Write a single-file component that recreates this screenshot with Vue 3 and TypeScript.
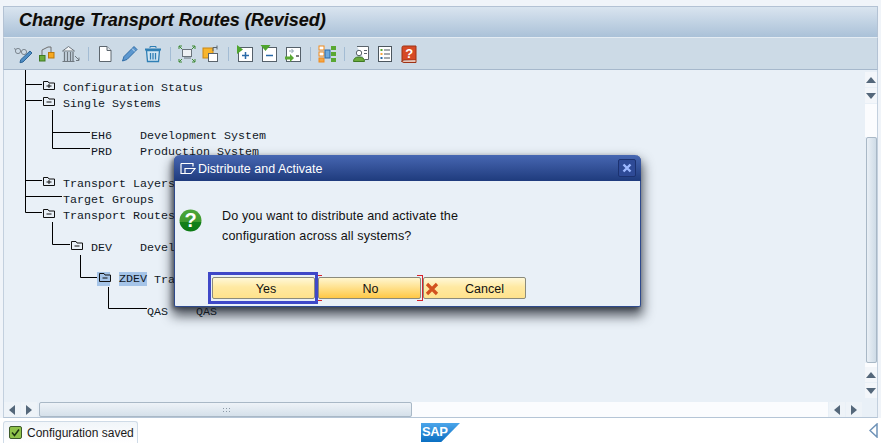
<script setup lang="ts">
interface Row { x: number; icon?: 'plus' | 'minus'; sel?: string; text: string }
const rows: Row[] = [
  { x: 43, icon: 'plus', text: 'Configuration Status' },
  { x: 43, icon: 'minus', text: 'Single Systems' },
  { x: 0, text: '' },
  { x: 91, text: 'EH6    Development System' },
  { x: 91, text: 'PRD    Production System' },
  { x: 0, text: '' },
  { x: 43, icon: 'plus', text: 'Transport Layers' },
  { x: 63, text: 'Target Groups' },
  { x: 43, icon: 'minus', text: 'Transport Routes' },
  { x: 0, text: '' },
  { x: 71, icon: 'minus', text: 'DEV    Development' },
  { x: 0, text: '' },
  { x: 99, icon: 'minus', sel: 'ZDEV', text: ' Tran' },
  { x: 0, text: '' },
  { x: 147, text: 'QAS    QAS' },
]
const connectors = [
  'M25.5 70V212.5H42', 'M25.5 84.5H42', 'M25.5 100.5H42', 'M25.5 180.5H42', 'M25.5 196.5H62',
  'M52.5 110V148.5H90', 'M52.5 132.5H90',
  'M52.5 222V244.5H70', 'M80.5 255V277.5H97', 'M108.5 287V308.5H147',
]
</script>

<template>
  <div class="page">
    <div class="frame">
      <div class="titlebar"><h1>Change Transport Routes (Revised)</h1></div>
      <div class="toolbar">
        <span class="slot"><svg viewBox="0 0 20 20"><circle cx="5" cy="7" r="2.6" fill="none" stroke="#7d8790"/><circle cx="11" cy="8" r="2.6" fill="none" stroke="#7d8790"/><path d="M7.6 7.5 8.6 7.8M2.5 6 1.5 4" stroke="#7d8790" fill="none"/><path d="M17 7l2 2-9 9-3 .7.7-3z" fill="#4f8dc4" stroke="#2c6496"/></svg></span>
        <span class="slot"><svg viewBox="0 0 20 20"><path d="M5 11V6l6-3h3v5" fill="none" stroke="#6f6f6f"/><rect x="2.5" y="11.5" width="5.5" height="5.5" fill="#6cab3c" stroke="#3f7a22"/><rect x="11.5" y="8.5" width="5.5" height="5.5" fill="#f7a81f" stroke="#b9770c"/></svg></span>
        <span class="slot"><svg viewBox="0 0 20 20"><path d="M1.5 7 7.5 2.5l6 4.5zM1.5 17.5h12" fill="#f3f5f7" stroke="#6f7880"/><path d="M3.5 8v9M6.5 8v9M9.5 8v9M12 8v9" stroke="#6f7880" stroke-width="1.3"/><path d="M14 12l4 4M18 13.5V16.5H15" fill="none" stroke="#6f7880"/></svg></span>
        <span class="sep"></span>
        <span class="slot"><svg viewBox="0 0 20 20"><path d="M4.5 2.500h7.500l4 4v11h-11.500z" fill="#fff" stroke="#5d666e"/><path d="M12 2.500v4h4" fill="#dfe5ea" stroke="#5d666e"/></svg></span>
        <span class="slot"><svg viewBox="0 0 20 20"><path d="M15 2.500l3 3-10 10-4.500 1.500 1.500-4.500z" fill="#5c97cf" stroke="#2f6ca6"/><path d="M13 4.500l3 3" stroke="#cfe2f3"/></svg></span>
        <span class="slot"><svg viewBox="0 0 20 20"><path d="M2 5.500h16" stroke="#2f7fb5" stroke-width="2"/><path d="M7 4V2.500h6V4" fill="none" stroke="#2f7fb5"/><path d="M3.500 6.500h13l-1 11h-11z" fill="#d2e6f3" stroke="#2f7fb5" stroke-width="1.300"/><path d="M7.500 9v6.500M10 9v6.500M12.500 9v6.500" stroke="#2f7fb5" stroke-width="1.300"/></svg></span>
        <span class="sep"></span>
        <span class="slot"><svg viewBox="0 0 20 20"><rect x="5.500" y="5.500" width="9" height="7" fill="#eef1f4" stroke="#6b747c"/><path d="M7 14h7" stroke="#6b747c"/><path d="M2 2l3 3M2 5V2h3M18 2l-3 3M18 5V2h-3M2 18l3-3M2 15v3h3M18 18l-3-3M18 15v3h-3" fill="none" stroke="#3f8a35"/></svg></span>
        <span class="slot"><svg viewBox="0 0 20 20"><rect x="2" y="4" width="10" height="10" fill="#f8b52c" stroke="#c98613"/><rect x="7.500" y="9.500" width="9" height="8" fill="#fff" stroke="#5b646c"/><path d="M12 7V3.500h4M16 1.500v4" fill="none" stroke="#5b646c"/></svg></span>
        <span class="sep"></span>
        <span class="slot"><svg viewBox="0 0 20 20"><rect x="3.500" y="3.500" width="14" height="14" fill="#fff" stroke="#55606a"/><path d="M2 1v9l6-4.500z" fill="#4fa52e"/><path d="M10.500 8v7M7 11.500h7" stroke="#2a6aa8" stroke-width="1.500"/></svg></span>
        <span class="slot"><svg viewBox="0 0 20 20"><rect x="3.500" y="3.500" width="14" height="14" fill="#fff" stroke="#55606a"/><path d="M1.500 1h10l-5 6z" fill="#4fa52e"/><path d="M7 11.500h7" stroke="#2a6aa8" stroke-width="1.500"/></svg></span>
        <span class="slot"><svg viewBox="0 0 20 20"><rect x="3.500" y="3.500" width="14" height="14" fill="#fff" stroke="#55606a"/><path d="M2 12.500h5V10l4 4-4 4v-2.500H2z" fill="#5aa833"/><path d="M6 7h4M8.500 5l2 2-2 2" fill="none" stroke="#8aa0ae"/><path d="M13 12h3" stroke="#333" stroke-width="1.300"/></svg></span>
        <span class="sep"></span>
        <span class="slot"><svg viewBox="0 0 20 20"><rect x="2" y="2" width="5" height="4" fill="#fff" stroke="#f08a1c"/><rect x="2" y="8" width="5" height="4" fill="#fff" stroke="#f08a1c"/><rect x="2" y="14" width="5" height="4" fill="#f5a642" stroke="#f08a1c"/><rect x="8" y="6" width="5" height="8" fill="#6fa9dc" stroke="#2a6aa8"/><rect x="14" y="2" width="5" height="4" fill="#5aa833"/><rect x="14" y="8" width="5" height="4" fill="#5aa833"/><rect x="14" y="14" width="5" height="4" fill="#5aa833"/></svg></span>
        <span class="sep"></span>
        <span class="slot"><svg viewBox="0 0 20 20"><path d="M6 2.500h11.500v13h-4" fill="#fff" stroke="#5b646c"/><circle cx="8" cy="9" r="2.700" fill="#fff" stroke="#5b646c"/><path d="M2.500 17.500c0-3 2-4.500 5.500-4.500s5.500 1.500 5.500 4.500z" fill="#6cab3c" stroke="#3f7a22"/><path d="M13 6.500h3M13 9.500h3" stroke="#5b646c"/></svg></span>
        <span class="slot"><svg viewBox="0 0 20 20"><rect x="3.500" y="2.500" width="13" height="15" fill="#fff" stroke="#4c565e"/><rect x="5.500" y="5" width="2" height="2" fill="#5aa833"/><rect x="5.500" y="9" width="2" height="2" fill="#f5a642"/><rect x="5.500" y="13" width="2" height="2" fill="#2a6aa8"/><path d="M9 6h6M9 10h6M9 14h6" stroke="#4c565e"/></svg></span>
        <span class="slot"><svg viewBox="0 0 20 20"><path d="M3 3.500q0-1.500 1.500-1.500H17v14H5q-2 0-2 2z" fill="#d64a25" stroke="#9e3214"/><path d="M3 17q0 1.500 2 1.500h12V16" fill="#e8c3b5" stroke="#9e3214"/><text x="10.300" y="14" class="qm">?</text></svg></span>
      </div>
      <div class="main">
        <div class="left">
          <div class="tree">
            <svg class="lines" viewBox="4 70 859 332" width="859" height="332"><path v-for="(d, i) in connectors" :key="i" :d="d" fill="none" stroke="#000"/></svg>
            <div v-for="(r, i) in rows" :key="i" class="row" :style="{ paddingLeft: r.x - 4 + 'px' }">
              <span v-if="r.icon" class="fold" :class="{ on: r.sel }">
                <svg width="12" height="9" viewBox="0 0 12 9"><path d="M.5 8.500V.5h4.500l1 1.500h5.500v6.500z" fill="none" stroke="#111"/><path d="M3.500 5h5" stroke="#111"/><path v-if="r.icon === 'plus'" d="M6 3v4" stroke="#111"/></svg>
              </span>
              <span v-if="r.sel" class="selected">{{ r.sel }}</span>{{ r.text }}
            </div>
          </div>
          <div class="hscroll">
            <span class="sb"><i class="arr al"></i></span>
            <span class="sb"><i class="arr ar"></i></span>
            <span class="hthumb"><i class="grip"></i></span>
            <span class="htrack"></span>
            <span class="sb"><i class="arr al"></i></span>
            <span class="sb"><i class="arr ar"></i></span>
          </div>
        </div>
        <div class="vscroll">
          <span class="vb"><i class="arr au"></i></span>
          <span class="vb"><i class="arr ad"></i></span>
          <span class="vtrack"></span>
          <span class="vthumb"></span>
          <span class="vgap"></span>
          <span class="vb"><i class="arr au"></i></span>
          <span class="vb"><i class="arr ad"></i></span>
        </div>
      </div>
    </div>
    <div class="status">
      <div class="msg">
        <svg width="13" height="13" viewBox="0 0 13 13"><rect x=".5" y=".5" width="12" height="12" rx="1.500" fill="#8fc24a" stroke="#3d5a2a"/><path d="M3 6.500 5.500 9.500 10 3.500" fill="none" stroke="#1d3312" stroke-width="1.500"/></svg>
        <span>Configuration saved</span>
      </div>
      <div class="sap"><span>SAP</span></div>
      <svg class="tri" width="9" height="15" viewBox="0 0 9 15"><path d="M8 1V14L1 7.500z" fill="#fff" stroke="#6f93b8" stroke-width="1.500"/></svg>
    </div>

    <div class="dialog">
      <div class="dhead">
        <svg width="16" height="14" viewBox="0 0 16 14"><path d="M1 1.500h12v3M1 1.500v10h8M5 6.500h10l-4 5H5z" fill="none" stroke="#fff" stroke-width="1.200"/></svg>
        <span class="dtitle">Distribute and Activate</span>
        <span class="close"><svg width="10" height="10" viewBox="0 0 10 10"><path d="M1.500 1.500l7 7M8.500 1.500l-7 7" stroke="#9db8ff" stroke-width="2.400"/></svg></span>
      </div>
      <div class="dbody">
        <svg class="q" width="23" height="23" viewBox="0 0 23 23"><defs><linearGradient id="qg" x1="0" y1="0" x2="0" y2="1"><stop offset="0" stop-color="#4ca63a"/><stop offset=".55" stop-color="#3f9a2e"/><stop offset=".56" stop-color="#14801a"/><stop offset="1" stop-color="#0c7a14"/></linearGradient></defs><circle cx="11.500" cy="11.500" r="11" fill="url(#qg)"/><text x="11.500" y="17.500" class="qw">?</text></svg>
        <p>Do you want to distribute and activate the<br>configuration across all systems?</p>
      </div>
      <div class="dbtns">
        <button class="btn yes">Yes</button>
        <button class="btn no">No</button>
        <button class="btn cancel">
          <svg width="14" height="14" viewBox="0 0 14 14"><path d="M2 2l10 10M12 2 2 12" stroke="#d2521f" stroke-width="3.200"/></svg>
          <span>Cancel</span>
        </button>
      </div>
    </div>
  </div>
</template>

<style scoped>
.page { position: relative; width: 881px; height: 443px; background: #fff; display: flex; flex-direction: column; overflow: hidden; font-family: "Liberation Sans", Arial, sans-serif; }
.frame { height: 418px; padding: 6px 3px 0 3px; background: #f0f4f9; display: flex; flex-direction: column; box-sizing: border-box; }
.titlebar { height: 31px; flex: none; box-sizing: border-box; border: 1px solid #b3c2d4; border-bottom: 0; background: linear-gradient(#d9e4ef, #aac1d8); padding: 0 0 4px 15px; display: flex; align-items: center; }
h1 { margin: 0; font-size: 18px; font-weight: bold; font-style: italic; color: #0c0c0c; white-space: nowrap; text-shadow: .5px 0 0 rgba(190,110,0,.35); }
.toolbar { height: 33px; flex: none; box-sizing: border-box; display: flex; align-items: center; padding-left: 7px; background: #ccdae6; border: 1px solid #b3c2d4; border-top-color: #e4ecf3; border-bottom-color: #a6b8cc; }
.slot { width: 24px; height: 20px; display: flex; justify-content: center; }
.slot svg { width: 20px; height: 20px; }
.sep { width: 10px; display: flex; justify-content: center; position: relative; height: 14px; }
.sep::before { content: ""; width: 1px; background: #a3bcd4; }
.qm { font: bold 13px "Liberation Sans", sans-serif; fill: #fff; text-anchor: middle; }
.main { flex: 1; display: flex; min-height: 0; background: #e9f0f7; border-left: 1px solid #c3d0de; border-right: 1px solid #c3d0de; border-bottom: 1px solid #b5c5d6; }
.left { width: 859px; display: flex; flex-direction: column; flex: none; }
.tree { position: relative; height: 332px; box-sizing: border-box; padding-top: 10px; overflow: hidden; flex: none; }
.lines { position: absolute; left: 0; top: 0; }
.row { position: relative; height: 16px; display: flex; font: 11.670px/16px "Liberation Mono", "Courier New", monospace; color: #10181f; white-space: pre; }
.fold { width: 20px; display: block; flex: none; position: relative; }
.fold svg { position: absolute; left: 0; top: 1px; }
.fold.on::before { content: ""; position: absolute; left: -2px; top: 0; width: 13px; height: 14px; background: #a5c4e8; }
.selected { background: #a5c4e8; height: 14px; line-height: 14px; }
.hscroll { height: 15px; display: flex; align-items: stretch; }
.sb { width: 16px; flex: none; background: #eef3f8; margin-right: 1px; display: flex; align-items: center; justify-content: center; }
.hthumb { width: 373px; margin-left: 1px; box-sizing: border-box; border: 1px solid #a9b8c6; border-radius: 2px; background: linear-gradient(#eef3f8, #d5e0ea); display: flex; align-items: center; justify-content: center; }
.grip { width: 8px; height: 5px; background-image: radial-gradient(circle, #8b98a5 .7px, transparent .8px); background-size: 3px 3px; }
.htrack { flex: 1; background: #fbfcfe; margin-right: 1px; }
.vscroll { width: 15px; margin-left: 2px; padding-top: 2px; display: flex; flex-direction: column; box-sizing: border-box; height: 330px; }
.vb { height: 15px; background: #f3f6fa; margin-bottom: 1px; display: flex; align-items: center; justify-content: center; flex: none; }
.vtrack { height: 33px; background: #fbfcfe; flex: none; }
.vthumb { height: 226px; box-sizing: border-box; border: 1px solid #a9b8c6; border-radius: 2px; background: linear-gradient(90deg, #eaf0f6, #cfdce7); flex: none; margin-left: 1px; }
.vgap { height: 4px; background: #fbfcfe; flex: none; }
.arr { display: block; width: 0; height: 0; }
.al { border-top: 5px solid transparent; border-bottom: 5px solid transparent; border-right: 6px solid #54677a; }
.ar { border-top: 5px solid transparent; border-bottom: 5px solid transparent; border-left: 6px solid #54677a; }
.au { border-left: 5px solid transparent; border-right: 5px solid transparent; border-bottom: 6px solid #54677a; }
.ad { border-left: 5px solid transparent; border-right: 5px solid transparent; border-top: 6px solid #54677a; }
.status { flex: 1; display: flex; align-items: flex-start; padding: 3px 3px 0 3px; background: #fff; min-height: 0; }
.msg { width: 135px; height: 22px; box-sizing: border-box; border: 1px solid #cfdbe7; border-bottom: 0; border-radius: 3px 3px 0 0; background: linear-gradient(#f1f5f9, #fff); display: flex; align-items: center; gap: 5px; padding-left: 5px; font: 12px "Liberation Sans", sans-serif; color: #1a1a1a; flex: none; }
.sap { width: 39px; height: 19px; margin-left: 283px; margin-top: 2px; flex: none; background: linear-gradient(#4ba5ea, #0a6fc2); clip-path: polygon(0 0, 100% 0, 52% 100%, 0 100%); }
.sap span { display: block; padding-left: 1px; font: bold 13px/18px "Liberation Sans", sans-serif; letter-spacing: -.4px; color: #fff; }
.tri { margin-left: auto; margin-top: 2px; }
.dialog { position: absolute; left: 174px; top: 155px; width: 467px; height: 152px; box-sizing: border-box; background: #e9f0f7; border: 1px solid #2e4a8c; border-top: 0; border-radius: 6px 6px 2px 2px; box-shadow: 0 7px 12px 2px rgba(20,25,35,.7), -2px 2px 4px rgba(20,25,35,.45); display: flex; flex-direction: column; }
.dhead { height: 26px; flex: none; background: linear-gradient(#4767b2, #1f3b7d); border-radius: 6px 6px 0 0; margin: 0 -1px; display: flex; align-items: center; padding: 2px 5px 0 6px; box-sizing: border-box; color: #fff; }
.dtitle { margin-left: 2px; font: 12.500px "Liberation Sans", sans-serif; }
.close { margin-left: auto; margin-top: -2px; width: 16px; height: 16px; display: flex; align-items: center; justify-content: center; border: 1px solid #1c3270; border-radius: 2px; background: #2e4a96; }
.dbody { display: flex; padding: 25px 0 0 4px; height: 71px; flex: none; }
.q { margin-top: 3px; flex: none; }
.dbody p { margin: 0 0 0 20px; font: 12.600px/20px "Liberation Sans", sans-serif; letter-spacing: .12px; color: #111; }
.dbtns { display: flex; padding-left: 37px; gap: 2px; margin-top: 0; }
.btn { position: relative; width: 103px; height: 22px; box-sizing: border-box; border: 1px solid #8b8b7c; border-radius: 2px; padding: 1px 0 0; font: 12.500px "Liberation Sans", sans-serif; color: #111; background: linear-gradient(#fff8d8, #ffe9a2 45%, #ffe28c); }
.yes { margin-right: 1px; padding-left: 5px; }
.yes::after { content: ""; position: absolute; left: -5px; top: -6px; right: -4px; bottom: -6px; border: 3px solid #3f48c8; pointer-events: none; z-index: 2; }
.no { background: linear-gradient(#fff6cf, #ffe08a 50%, #ffc846); padding-left: 2px; }
.no::after { content: ""; position: absolute; left: -2px; top: -3px; right: -3px; bottom: -3px; border: 1px solid #d8222a; clip-path: polygon(0 0, 5px 0, 5px 100%, 0 100%, 0 0, 100% 0, 100% 100%, calc(100% - 6px) 100%, calc(100% - 6px) 0, 100% 0, 0 0); pointer-events: none; }
.cancel { display: flex; align-items: center; padding-left: 1px; }
.cancel span { margin-left: 26px; }
.qw { font: bold 20px "Liberation Sans", sans-serif; fill: #fff; text-anchor: middle; }
</style>
<style>
body { margin: 0; }
</style>
